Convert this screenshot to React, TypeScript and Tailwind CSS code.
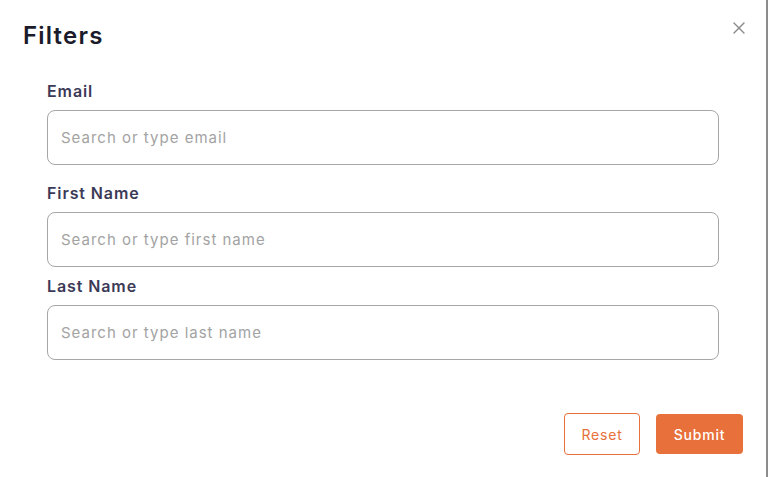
import { X } from 'lucide-react';

const fields = [
  { label: 'Email', placeholder: 'Search or type email', gap: 'mb-4' },
  { label: 'First Name', placeholder: 'Search or type first name', gap: 'mb-[7px]' },
  { label: 'Last Name', placeholder: 'Search or type last name', gap: '' },
];

export default function App() {
  return (
    <div
      className="relative flex h-[477px] w-[768px] flex-col overflow-hidden border-r-2 border-[#8c8c8c] bg-white"
      style={{ fontFamily: '"Inter", "Liberation Sans", sans-serif' }}
    >
      {/* close */}
      <button aria-label="close" className="absolute right-[17px] top-[18px] text-[#8a8a8a]">
        <X size={20} strokeWidth={1.6} />
      </button>

      <h2 className="px-[23px] pt-5 text-[24px] font-semibold leading-8 tracking-[1.2px] text-[#1b1b2b]">Filters</h2>

      <div className="mt-[27px] flex flex-col px-[47px]">
        {fields.map((f) => (
          <div key={f.label} className={f.gap}>
            <label className="block text-[16px] font-semibold leading-6 tracking-[0.9px] text-[#3c3a56]">
              {f.label}
            </label>
            <input
              placeholder={f.placeholder}
              className="mt-[7px] h-[55px] w-[672px] rounded-lg border border-[#a6a6a6] px-[13px] text-[15px] tracking-[1px] text-[#333] outline-none placeholder:text-[#a3a3a3]"
            />
          </div>
        ))}
      </div>

      <div className="mt-auto flex items-center justify-end gap-4 pb-[22px] pr-[23px]">
        <button className="h-[42px] w-[76px] rounded border border-[#e8703a] text-[14px] tracking-[0.8px] text-[#e8703a]">
          Reset
        </button>
        <button className="h-[40px] w-[87px] rounded bg-[#e8703a] text-[14px] font-medium tracking-[0.8px] text-white">
          Submit
        </button>
      </div>
    </div>
  );
}
